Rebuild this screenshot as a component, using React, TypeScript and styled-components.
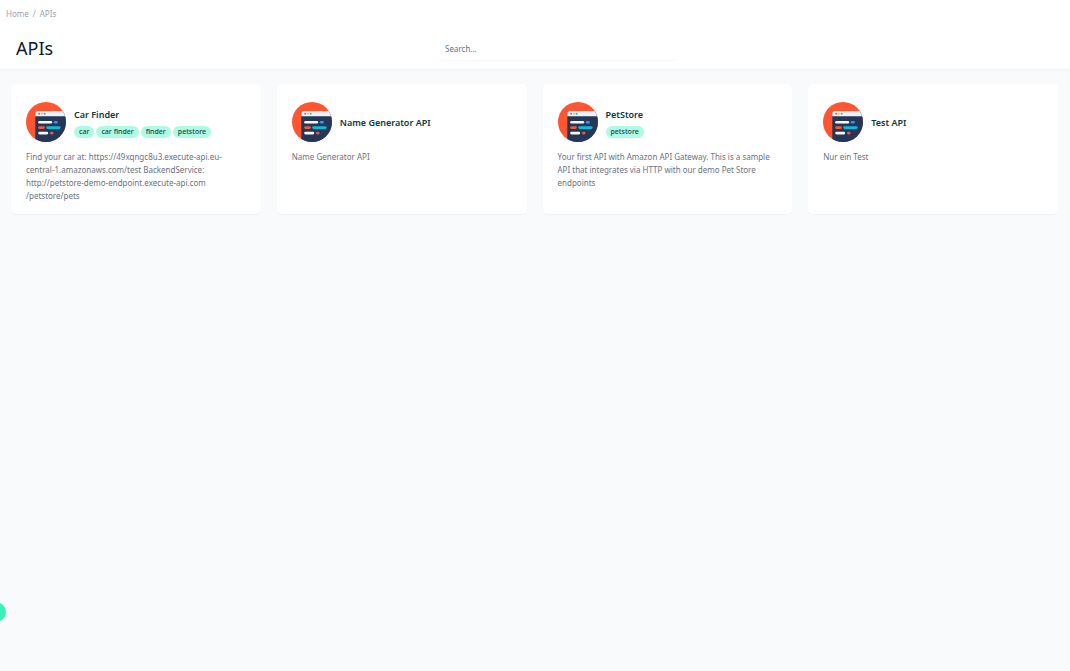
import React from 'react';
import styled, { createGlobalStyle } from 'styled-components';

const GlobalStyle = createGlobalStyle`
  *, *::before, *::after { box-sizing: border-box; }
  body {
    margin: 0;
    background: #f9fafc;
    color: #6b7280;
    font-family: "Segoe UI", "Noto Sans", "Open Sans", sans-serif;
    font-size: 8px;
    line-height: 12px;
  }
`;

const Page = styled.div`
  min-height: 100vh;
`;

const Header = styled.header`
  display: flex;
  flex-direction: column;
  gap: 16px;
  padding: 8px 0 9px;
  background: #fff;
  border-bottom: 1px solid #f3f4f6;
  box-shadow: 0 1px 1px rgba(0, 0, 0, 0.01);
`;

const Breadcrumb = styled.nav`
  display: flex;
  gap: 4px;
  padding: 0 6px;
  color: #9ca3af;
`;

const Crumb = styled.a`
  color: inherit;
  text-decoration: none;
`;

const TitleRow = styled.div`
  display: grid;
  grid-template-columns: 423fr 238fr 377fr;
  align-items: center;
  padding: 0 16px;
`;

const Title = styled.h1`
  margin: 0;
  color: #111827;
  font-size: 18px;
  font-weight: 400;
  line-height: 24px;
`;

const Search = styled.input`
  width: 100%;
  height: 24px;
  padding: 0 6px;
  border: 0;
  border-radius: 4px;
  background: #fff;
  box-shadow: 0 1px 1px rgba(0, 0, 0, 0.04);
  color: #374151;
  font: inherit;
  &::placeholder {
    color: #6b7280;
    opacity: 1;
  }
`;

const Grid = styled.main`
  display: grid;
  grid-template-columns: repeat(4, minmax(0, 1fr));
  gap: 16px;
  padding: 14px 12px 16px 11px;
`;

const Card = styled.article`
  min-height: 130px;
  padding: 18px 15px 12px;
  border-radius: 5px;
  background: #fff;
  box-shadow: 0 1px 1px rgba(0, 0, 0, 0.04);
`;

const CardHead = styled.div`
  display: flex;
  align-items: center;
  gap: 8px;
  margin-bottom: 8px;
`;

const Logo = styled.svg`
  flex: none;
  width: 40px;
  height: 40px;
`;

const Name = styled.h2`
  margin: 0;
  color: #0d3740;
  font-size: 9px;
  font-weight: 600;
  line-height: 15px;
`;

const Tags = styled.ul`
  display: flex;
  flex-wrap: wrap;
  gap: 2px;
  margin: 4px 0 0;
  padding: 0;
  list-style: none;
`;

const Tag = styled.li`
  padding: 0 5px;
  border-radius: 6px;
  background: #affae3;
  color: #12444a;
  font-size: 7px;
  font-weight: 500;
  line-height: 12px;
`;

const Description = styled.p`
  margin: 0;
  line-height: 13px;
`;

const Bubble = styled.button`
  position: fixed;
  left: -14px;
  bottom: 49px;
  width: 20px;
  height: 20px;
  padding: 0;
  border: 0;
  border-radius: 50%;
  background: #3bf0bb;
`;

const ApiLogo = ({ id }: { id: string }) => (
  <Logo viewBox="0 0 40 40" aria-hidden="true">
    <clipPath id={id}>
      <circle cx="20" cy="20" r="20" />
    </clipPath>
    <g clipPath={`url(#${id})`}>
      <rect width="40" height="40" fill="#ff5530" />
      <path d="M9.3 40V11a2 2 0 0 1 2-2H40v31z" fill="#243757" />
      <path d="M9.3 14.3V11a2 2 0 0 1 2-2H40v5.3z" fill="#edf1fa" />
      <circle cx="13.2" cy="11.8" r="1" fill="#ff5530" />
      <circle cx="15.9" cy="11.8" r="1" fill="#ffc31f" />
      <circle cx="18.6" cy="11.8" r="1" fill="#12bcd8" />
      <rect x="12.2" y="19" width="14" height="2.6" rx="1.3" fill="#f5f7fc" />
      <rect x="27.8" y="19" width="4" height="2.6" rx="1.3" fill="#4b8df8" />
      <rect x="12.2" y="24.3" width="6.6" height="2.6" rx="1.3" fill="#ff5530" />
      <rect x="20.2" y="24.3" width="14.4" height="2.6" rx="1.3" fill="#08bddb" />
      <rect x="12.2" y="29.8" width="10" height="2.6" rx="1.3" fill="#f5f7fc" />
      <rect x="24" y="29.8" width="3.6" height="2.6" rx="1.3" fill="#f0524c" />
    </g>
  </Logo>
);

type Api = { name: string; tags: string[]; description: React.ReactNode };

const apis: Api[] = [
  {
    name: 'Car Finder',
    tags: ['car', 'car finder', 'finder', 'petstore'],
    description: (
      <>
        Find your car at: https://49xqngc8u3.execute-api.eu-
        <wbr />
        central-1.amazonaws.com/test BackendService: http://petstore-demo-endpoint.execute-api.com
        <br />
        /petstore/pets
      </>
    ),
  },
  { name: 'Name Generator API', tags: [], description: 'Name Generator API' },
  {
    name: 'PetStore',
    tags: ['petstore'],
    description:
      'Your first API with Amazon API Gateway. This is a sample API that integrates via HTTP with our demo Pet Store endpoints',
  },
  { name: 'Test API', tags: [], description: 'Nur ein Test' },
];

export default function App() {
  return (
    <Page>
      <GlobalStyle />
      <Header>
        <Breadcrumb aria-label="Breadcrumb">
          <Crumb href="#home">Home</Crumb>
          <span>/</span>
          <Crumb href="#apis">APIs</Crumb>
        </Breadcrumb>
        <TitleRow>
          <Title>APIs</Title>
          <Search type="search" placeholder="Search..." aria-label="Search APIs" />
        </TitleRow>
      </Header>
      <Grid>
        {apis.map((api, index) => (
          <Card key={api.name}>
            <CardHead>
              <ApiLogo id={`api-logo-${index}`} />
              <div>
                <Name>{api.name}</Name>
                {api.tags.length > 0 && (
                  <Tags>
                    {api.tags.map((tag) => (
                      <Tag key={tag}>{tag}</Tag>
                    ))}
                  </Tags>
                )}
              </div>
            </CardHead>
            <Description>{api.description}</Description>
          </Card>
        ))}
      </Grid>
      <Bubble type="button" aria-label="Open menu" />
    </Page>
  );
}
